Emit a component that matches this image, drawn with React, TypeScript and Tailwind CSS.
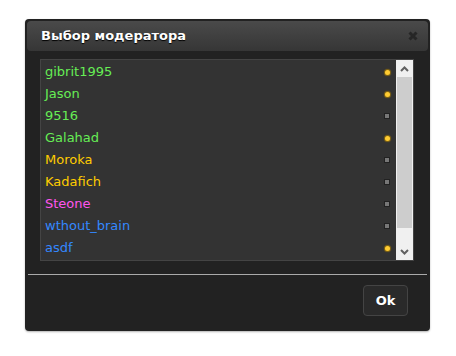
import React from "react"

type User = { name: string; color: string; online: boolean }

const users: User[] = [
  { name: "gibrit1995", color: "text-[#66ee55]", online: true },
  { name: "Jason", color: "text-[#66ee55]", online: true },
  { name: "9516", color: "text-[#66ee55]", online: false },
  { name: "Galahad", color: "text-[#66ee55]", online: true },
  { name: "Moroka", color: "text-[#ffcc00]", online: false },
  { name: "Kadafich", color: "text-[#ffcc00]", online: false },
  { name: "Steone", color: "text-[#ff55ee]", online: false },
  { name: "wthout_brain", color: "text-[#3388ff]", online: false },
  { name: "asdf", color: "text-[#3388ff]", online: true },
]

function StatusDot({ online }: { online: boolean }) {
  if (online) {
    return <span className="block w-[5px] h-[5px] rounded-full bg-[#ffcc33] shadow-[0_0_1px_1px_#8a6a10]" />
  }
  return <span className="block w-[4px] h-[4px] bg-[#777] border border-[#222] box-content" />
}

function Scrollbar() {
  return (
    <div className="w-[17px] h-full flex flex-col bg-[#f0f0f0]">
      <div className="h-[17px] flex items-center justify-center">
        <svg width="9" height="6" viewBox="0 0 9 6">
          <path d="M1 5 L4.5 1.5 L8 5" stroke="#606060" strokeWidth="2" fill="none" />
        </svg>
      </div>
      <div className="mx-[1px] h-[151px] bg-[#cdcdcd]" />
      <div className="flex-1" />
      <div className="h-[17px] flex items-center justify-center">
        <svg width="9" height="6" viewBox="0 0 9 6">
          <path d="M1 1 L4.5 4.5 L8 1" stroke="#606060" strokeWidth="2" fill="none" />
        </svg>
      </div>
    </div>
  )
}

export default function App(): JSX.Element {
  return (
    <div className="w-[456px] h-[356px] bg-white pt-[19px] pl-[25px]" style={{ fontFamily: '"DejaVu Sans", Verdana, sans-serif' }}>
      <div className="w-[405px] h-[312px] bg-[#222] rounded-[4px] p-[2px] flex flex-col shadow-[0_1px_2px_rgba(0,0,0,0.3)]">
        <div className="h-[30px] rounded-[4px] bg-gradient-to-b from-[#4a4a4a] to-[#363636] flex items-center justify-between pl-[14px] pr-[10px]">
          <span className="text-white font-bold text-[13px] [text-shadow:0_1px_1px_#000]">Выбор модератора</span>
          <svg width="10" height="10" viewBox="0 0 10 10">
            <path d="M1.5 1.5 L8.5 8.5 M8.5 1.5 L1.5 8.5" stroke="#262626" strokeWidth="3" />
          </svg>
        </div>
        <div className="mt-[8px] ml-[13px] w-[374px] h-[202px] border border-[#444] bg-[#333] flex">
          <div className="flex-1 overflow-hidden pt-[1px]">
            {users.map((u) => (
              <div key={u.name} className="h-[22px] flex items-center justify-between pl-[4px] pr-[6px]">
                <span className={`text-[13px] ${u.color}`}>{u.name}</span>
                <StatusDot online={u.online} />
              </div>
            ))}
          </div>
          <Scrollbar />
        </div>
        <div className="mt-[13px] mx-[1px] h-[1px] bg-[#aaa]" />
        <div className="flex justify-end pt-[10px] pr-[20px]">
          <button className="w-[45px] h-[31px] rounded-[4px] bg-[#2a2a2a] border border-[#444] text-white font-bold text-[13px]">
            Ok
          </button>
        </div>
      </div>
    </div>
  )
}
